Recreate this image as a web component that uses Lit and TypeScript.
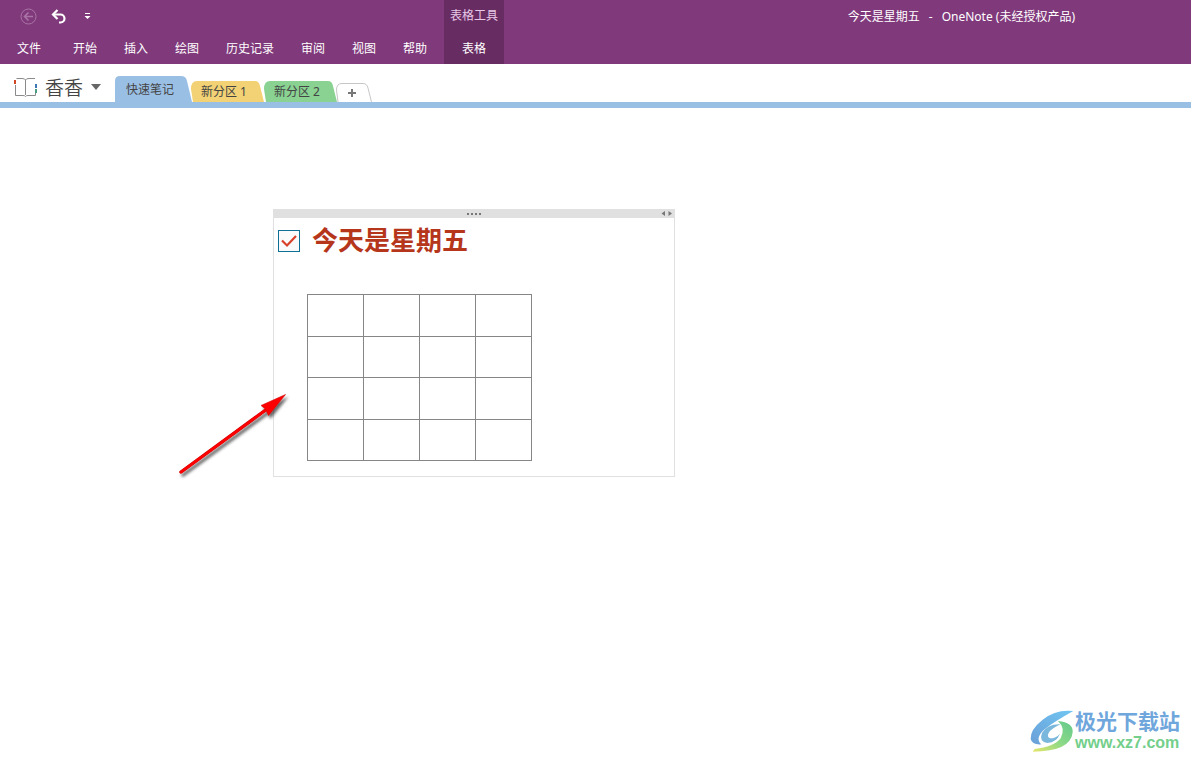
import { LitElement, html, svg, css } from "lit";
import { customElement, state } from "lit/decorators.js";

const MENU = ["开始", "插入", "绘图", "历史记录", "审阅", "视图", "帮助"];

@customElement("app-root")
export class AppRoot extends LitElement {
  static styles = css`
    :host {
      display: flex;
      flex-direction: column;
      min-height: 100vh;
      background: #fff;
      color: #444;
      font: 12px/16px "Noto Sans", "Noto Sans CJK SC", sans-serif;
    }
    button {
      margin: 0;
      padding: 0;
      border: 0;
      background: none;
      color: inherit;
      font: inherit;
      white-space: nowrap;
    }
    svg {
      display: block;
    }
    .ribbon {
      display: flex;
      height: 64px;
      background: #80397b;
      color: #fff;
      font-family: "Noto Sans CJK SC", sans-serif;
    }
    .left {
      padding: 0 17px;
    }
    .quick {
      display: flex;
      align-items: center;
      height: 32px;
      gap: 14px;
      padding-left: 3px;
    }
    .menu {
      display: flex;
      align-items: center;
      height: 32px;
      gap: 27px;
    }
    .file {
      margin-right: 5px;
    }
    .context {
      display: flex;
      flex-direction: column;
      align-items: center;
      width: 60px;
      background: #672c62;
    }
    .context-title {
      height: 32px;
      line-height: 30px;
      color: #e8c8e6;
    }
    .context button {
      height: 32px;
    }
    .title {
      display: flex;
      gap: 9px;
      margin: 0 116px 0 auto;
      font: 12px/34px "Noto Sans", "Noto Sans CJK SC", sans-serif;
      white-space: nowrap;
    }
    .sections {
      display: flex;
      align-items: flex-end;
      height: 38px;
      border-bottom: 6px solid #9abfe5;
    }
    .notebook {
      display: flex;
      align-items: center;
      height: 30px;
      gap: 8px;
      box-sizing: border-box;
      width: 115px;
      padding-left: 14px;
      font: 350 19px/28px "Noto Sans CJK SC", sans-serif;
    }
    .tab {
      display: grid;
      position: relative;
      margin-right: -2px;
    }
    .tab > * {
      grid-area: 1 / 1;
    }
    .tab span {
      align-self: center;
      position: relative;
      text-align: left;
      padding-left: 11px;
    }
    .current {
      z-index: 1;
    }
    .current span {
      padding-top: 2px;
    }
    .canvas {
      position: relative;
      flex: 1;
    }
    .note {
      position: absolute;
      left: 273px;
      top: 101px;
      box-sizing: border-box;
      width: 402px;
      border: 1px solid #e0e0e0;
      border-top: 0;
      padding-bottom: 15px;
    }
    .grip {
      display: grid;
      grid-template-columns: 1fr auto 1fr;
      align-items: center;
      height: 9px;
      background: #e0e0e0;
    }
    .grip .resize {
      justify-self: end;
      margin-right: 1px;
    }
    .todo {
      display: flex;
      align-items: flex-start;
      gap: 12px;
      height: 46px;
      padding-left: 4px;
      color: #b5361a;
      font: 700 26px/42px "Noto Sans CJK SC", sans-serif;
    }
    .check {
      display: grid;
      margin-top: 12px;
    }
    .check > * {
      grid-area: 1 / 1;
    }
    .check svg {
      position: relative;
      pointer-events: none;
    }
    input {
      appearance: none;
      box-sizing: border-box;
      width: 22px;
      height: 22px;
      margin: 0;
      border: 1px solid #0f7096;
      background: #fafafa;
    }
    table {
      width: 225px;
      height: 167px;
      margin: 30px 0 0 33px;
      border-collapse: collapse;
      table-layout: fixed;
    }
    td {
      padding: 0;
      border: 1px solid #868686;
    }
    .arrow {
      position: absolute;
      left: 170px;
      top: 277px;
    }
    .brand {
      position: absolute;
      right: 11px;
      bottom: 7px;
      display: flex;
      align-items: center;
      gap: 1px;
      color: #6fa6dc;
      font: 700 21px/23px "Noto Sans CJK SC", sans-serif;
    }
    .brand a {
      display: block;
      color: #73cf8b;
      font: 700 16px/21px "Liberation Sans", sans-serif;
      text-decoration: none;
    }
  `;

  @state() private done = true;

  private tab(name: string, color: string, height: number, width: number, current = false) {
    const shape = current
      ? `M0 ${height}V5Q0 0 5 0H66Q71 0 72 5L${width} ${height}Z`
      : `M3 ${height}L1 8Q1 0 7 0H${width - 10}Q${width - 6} 0 ${width - 5} 5L${width - 1} ${height}Z`;
    return html`<button class="tab ${current ? "current" : ""}" role="tab" aria-selected=${current}>
      <svg width=${width} height=${height}>${svg`<path d=${shape} fill=${color} />`}</svg>
      <span>${name}</span>
    </button>`;
  }

  render() {
    return html`
      <header class="ribbon">
        <div class="left">
          <div class="quick">
            <button aria-label="返回">
              <svg width="17" height="17" fill="none" stroke="#a974a5">
                <circle cx="8.5" cy="8.5" r="7.5" />
                <path d="M13 8.5H5M8.5 4.5l-4 4 4 4" stroke-width="1.6" />
              </svg>
            </button>
            <button aria-label="撤消">
              <svg width="15" height="15" fill="none" stroke="#fff" stroke-width="2.2">
                <path d="M2 5.5H9.500a3.900 3.900 0 0 1 0 8H8" />
                <path d="M6.500 1L2 5.500l4.500 4.500" />
              </svg>
            </button>
            <button aria-label="自定义快速访问工具栏">
              <svg width="16" height="8" fill="#fff">
                <path d="M5 1h5v1H5zM4.500 4h6L7.500 7z" />
              </svg>
            </button>
          </div>
          <nav class="menu">
            <button class="file">文件</button>
            ${MENU.map((m) => html`<button>${m}</button>`)}
          </nav>
        </div>
        <div class="context">
          <span class="context-title">表格工具</span>
          <button>表格</button>
        </div>
        <h1 class="title">
          <span>今天是星期五</span><span>-</span><span>OneNote (未经授权产品)</span>
        </h1>
      </header>
      <div class="sections">
        <button class="notebook">
          <svg width="23" height="20" fill="none" stroke="#8a8a8a">
            <path d="M2.500 1.500H8Q11 1.500 11.500 3Q12 1.500 15 1.500H21M11.500 3V18M1.500 8V18.500H9Q11 18.500 11.500 19.500Q12 18.500 14 18.500H21.500V16" />
            <path d="M0 3h2v4H0z" fill="#d24726" stroke="none" />
            <path d="M21 7h2v4h-2z" fill="#3e78b5" stroke="none" />
            <path d="M21 12h2v4h-2z" fill="#4a9c82" stroke="none" />
          </svg>
          <span>香香</span>
          <svg width="10" height="6"><path d="M0 0h10L5 6z" fill="#666" /></svg>
        </button>
        ${this.tab("快速笔记", "#9abfe5", 26, 77, true)}
        ${this.tab("新分区 1", "#f3d275", 21, 75)}
        ${this.tab("新分区 2", "#89d292", 21, 75)}
        <button class="tab" aria-label="新建分区">
          <svg width="38" height="19" fill="none">
            <path d="M2 19L.5 7Q.5 .5 6 .5H27Q31 .5 32 5L35.500 19" fill="#fff" stroke="#c6c6c6" />
            <path d="M12 10h8M16 6v8" stroke="#777" stroke-width="2" />
          </svg>
        </button>
      </div>
      <main class="canvas">
        <section class="note">
          <div class="grip">
            <i></i>
            <svg width="14" height="2" fill="#777">
              <path d="M0 0h2v2H0zM4 0h2v2H4zM8 0h2v2H8zM12 0h2v2h-2z" />
            </svg>
            <svg class="resize" width="12" height="5" fill="#777">
              <path d="M4 0v5L.5 2.500zM7.500 0v5l3.500-2.500z" />
            </svg>
          </div>
          <div class="todo">
            <span class="check">
              <input
                id="todo"
                type="checkbox"
                .checked=${this.done}
                @change=${(e: Event) => (this.done = (e.target as HTMLInputElement).checked)}
              />
              ${this.done
                ? html`<svg width="22" height="22" fill="none" stroke="#d8402a" stroke-width="2.2">
                    <path d="M4 10.500l5 5L18 6" />
                  </svg>`
                : ""}
            </span>
            <label for="todo">今天是星期五</label>
          </div>
          <table>
            <tbody>
              ${[0, 1, 2, 3].map(() => html`<tr>${[0, 1, 2, 3].map(() => html`<td></td>`)}</tr>`)}
            </tbody>
          </table>
        </section>
        <svg class="arrow" width="130" height="110">
          <defs>
            <filter id="shade" x="-20%" y="-20%" width="150%" height="150%">
              <feDropShadow dx="2" dy="3" stdDeviation="1.800" flood-color="#000" flood-opacity=".6" />
            </filter>
          </defs>
          <g filter="url(#shade)">
            <path d="M11 87L97 24" stroke="#c00" stroke-width="3.400" stroke-linecap="round" />
            <path d="M11 87L97 24" stroke="#f00" stroke-width="2.400" stroke-linecap="round" />
            <path d="M115.500 9.500L91 20.500L95.500 24L98.500 30.500Z" fill="#f00" stroke="#c00" stroke-width=".6" />
          </g>
        </svg>
        <div class="brand">
          <svg width="44" height="44" viewBox="0 0 132 132">
            <defs>
              <linearGradient id="sky" x1="0" y1="1" x2="1" y2="0">
                <stop offset="0" stop-color="#6b9fd8" />
                <stop offset="1" stop-color="#70c6f2" />
              </linearGradient>
              <linearGradient id="leaf" x1="0" y1="1" x2="1" y2="0">
                <stop offset="0" stop-color="#e6e66b" />
                <stop offset=".5" stop-color="#8bd987" />
                <stop offset="1" stop-color="#63c98c" />
              </linearGradient>
            </defs>
            <path d="M130 6Q78 0 38 32Q0 62 2 90Q6 108 34 106Q14 88 42 62Q72 38 130 6Z" fill="url(#sky)" />
            <path d="M84 36Q130 40 128 70Q122 128 8 128L14 120Q72 114 92 88Q108 58 84 36Z" fill="url(#leaf)" />
            <path d="M92 46Q52 44 36 72Q26 98 52 102Q80 100 90 74Q78 88 60 88Q50 84 56 72Q64 58 92 46Z" fill="#79b8dc" />
          </svg>
          <div>极光下载站<a href="#">www.xz7.com</a></div>
        </div>
      </main>
    `;
  }
}
